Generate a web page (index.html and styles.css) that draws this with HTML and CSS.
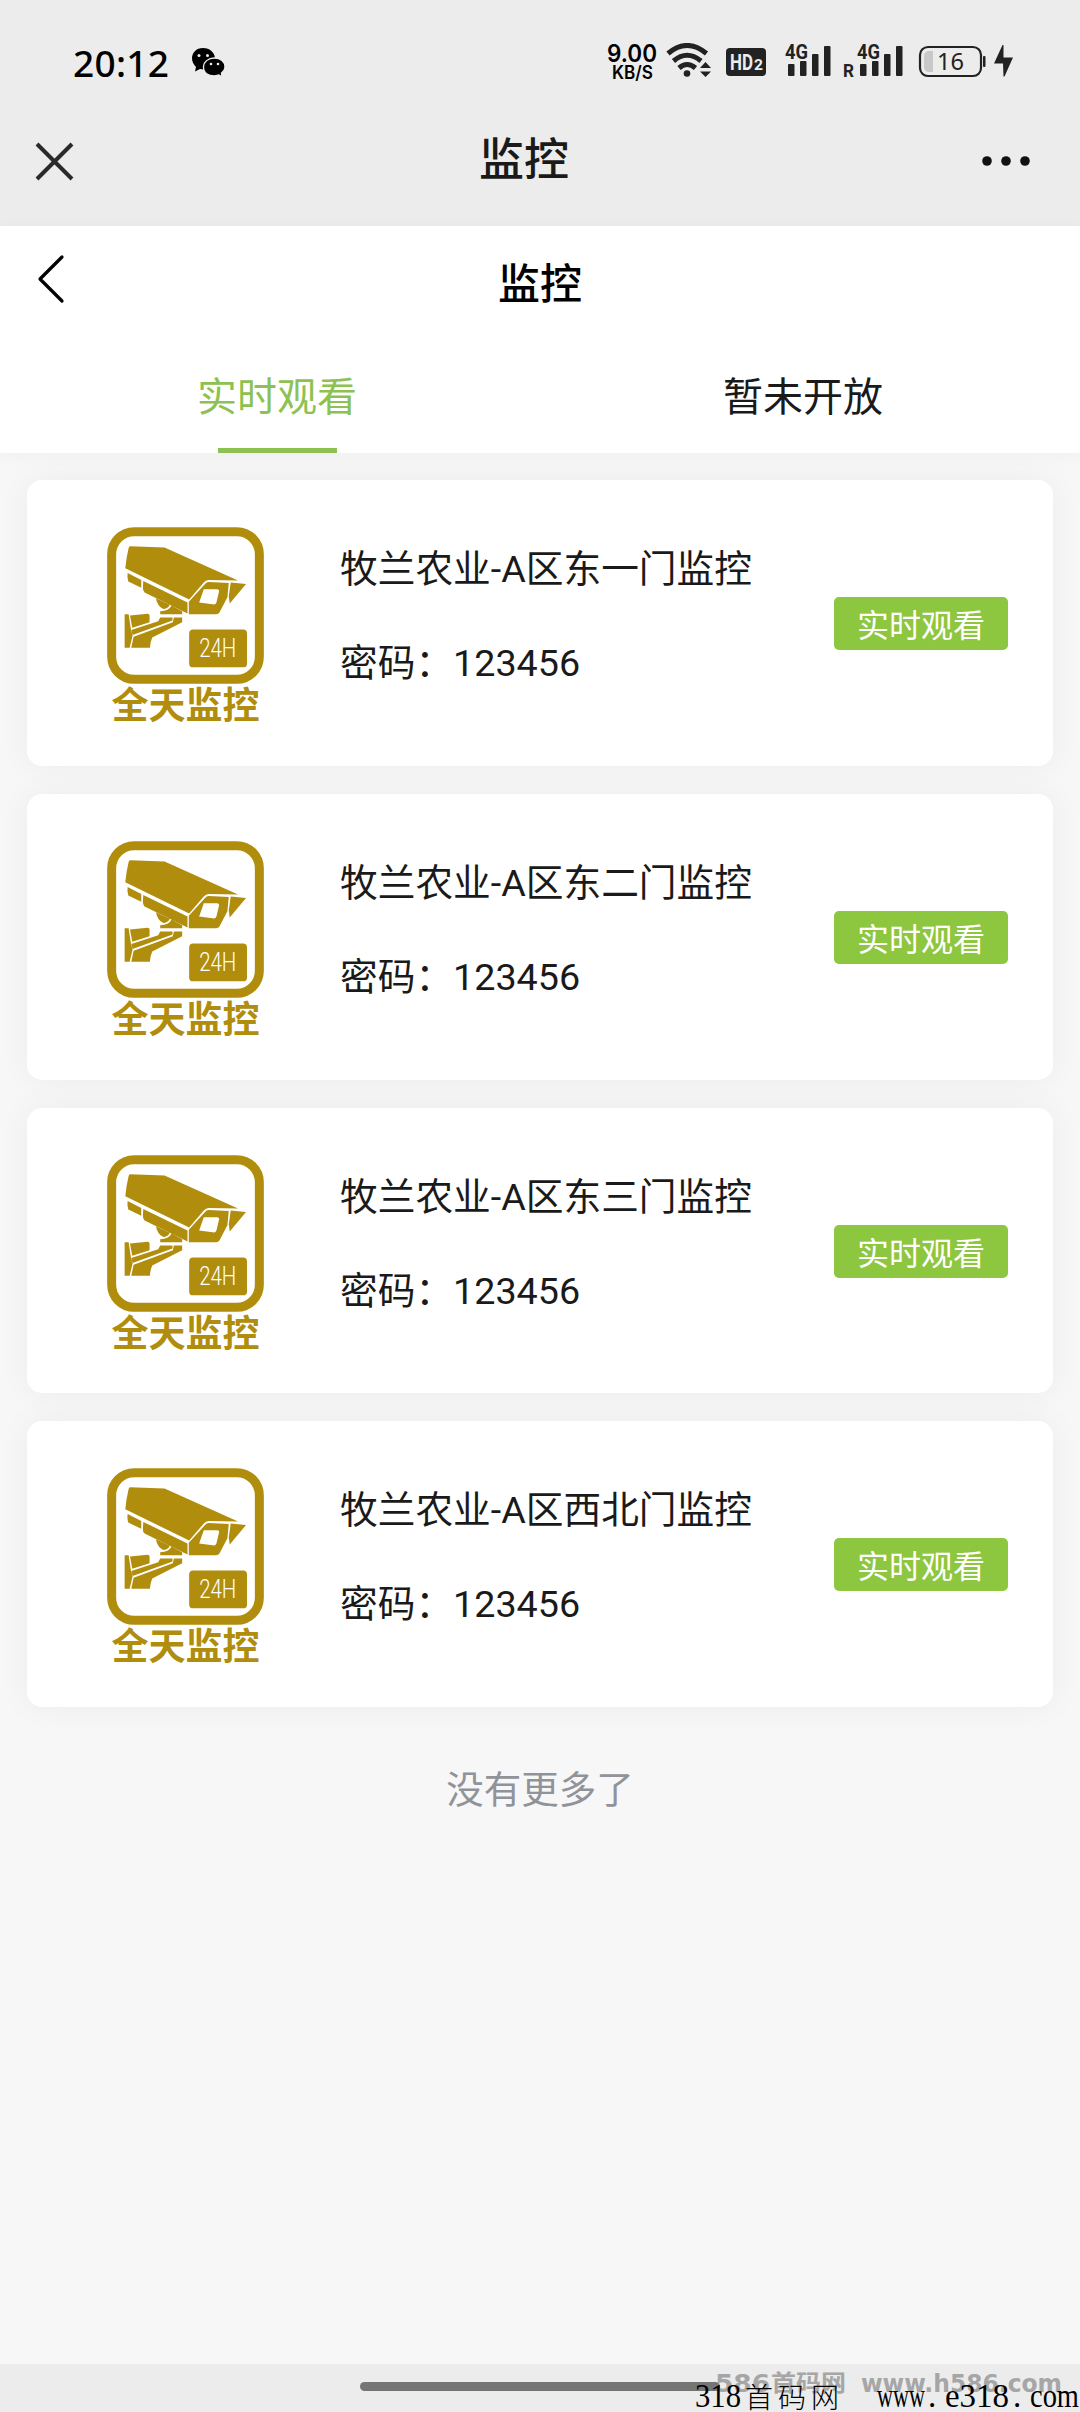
FILE: index.html
```html
<!DOCTYPE html>
<html lang="zh-CN">
<head>
<meta charset="utf-8">
<title>监控</title>
<link rel="stylesheet" href="styles.css">
</head>
<body>
<svg class="defs" width="0" height="0" aria-hidden="true">
  <symbol id="camera" viewBox="80 80 472 472">
    <rect x="94" y="94" width="444" height="444" rx="68" fill="none" stroke="#b08d0c" stroke-width="27"/>
    <g fill="#b08d0c">
      <path d="M150 138L253 142L474 241L386 239Q377 240 371 247L327 298L135 204Q138 172 145 143Q146 139 150 138Z"/>
      <path d="M142 218L183 239V263L144 244Q140 231 142 218Z"/>
      <path d="M189 242L322 307V340L193 277Q187 272 188 261Z"/>
      <path fill-rule="evenodd" d="M386 245L446 248L442 291L418 337Q415 342 408 342H326V305L374 252Q379 245 386 245ZM371 267L357 307L403 313Q407 312 409 307L417 273Q418 268 412 267Z"/>
      <path d="M452 247L498 251L449 310L446 289Z"/>
      <path d="M227 294L269 314Q262 328 248 326Q232 318 227 294Z"/>
      <path d="M274 316L306 333V342H240V333Q266 333 274 316Z"/>
      <path d="M133 342H145L152 388L157 406L148 443H133Z"/>
      <path d="M149 346L202 341Q208 341 208 347V366L156 383Z"/>
      <path d="M240 352H277V361L157 405L153 390L234 363Z"/>
      <path d="M281 352H306V366L216 412Q210 425 209 443H153L160 410L278 366Z"/>
      <rect x="327" y="388" width="174" height="114" rx="12"/>
    </g>
    <text x="357" y="471" class="camera-text" textLength="112" lengthAdjust="spacingAndGlyphs">24H</text>
  </symbol>
</svg>

<div class="screen">
  <header class="system">
    <div class="status">
      <span class="clock">20:12</span>
      <svg class="wechat" width="34" height="32" viewBox="0 0 34 32">
        <path d="M12 1C5 1 1 6 1 11.500C1 15 3 18 5 20L4 24.500L9 22C19 24 24 18 24 11.500C24 6 19 1 12 1Z"/>
        <path d="M23.500 11C17 11 12.500 15 12.500 20C12.500 26 17 29 23.500 29L28 28L31 30L30.500 26C33 24 34 22 34 20C34 15 29.500 11 23.500 11Z" stroke="#ececec" stroke-width="1.300"/>
        <g fill="#ececec"><circle cx="8" cy="8.500" r="1.500"/><circle cx="16.500" cy="8.500" r="1.500"/><circle cx="20" cy="17" r="1.300"/><circle cx="27" cy="17" r="1.300"/></g>
      </svg>
      <svg class="indicators" width="410" height="44" viewBox="0 0 410 44">
        <g class="speed"><text x="1" y="19" font-size="24" textLength="50" lengthAdjust="spacingAndGlyphs">9.00</text><text x="6" y="36" font-size="18.500" textLength="41" lengthAdjust="spacingAndGlyphs">KB/S</text></g>
        <g fill="none" stroke="#222" stroke-width="5">
          <path d="M62 10.500Q81 -5.500 100.500 10.500"/><path d="M67.500 18Q81 6.500 95 18"/><path d="M73 25Q81 18 89.500 25"/>
        </g>
        <g fill="#222">
          <circle cx="81" cy="30.500" r="3.300"/>
          <path d="M94 25L99.500 19L105 25ZM94 28.500H105L99.500 34Z"/>
          <rect x="120" y="5" width="40" height="28" rx="4"/>
        </g>
        <text x="124" y="26.500" class="cond" fill="#ececec" font-size="22" textLength="23" lengthAdjust="spacingAndGlyphs">HD</text>
        <text x="148" y="26.500" class="cond" fill="#ececec" font-size="14" textLength="9" lengthAdjust="spacingAndGlyphs">2</text>
        <g fill="#222">
          <text x="179" y="16" class="cond" font-size="21" textLength="23" lengthAdjust="spacingAndGlyphs">4G</text>
          <rect x="182" y="21" width="6.500" height="12" rx="1"/><rect x="194" y="18" width="6.500" height="15" rx="1"/><rect x="206" y="11" width="6.500" height="22" rx="1"/><rect x="218" y="3" width="6.500" height="30" rx="1"/>
          <text x="237" y="34" class="cond" font-size="18" textLength="11" lengthAdjust="spacingAndGlyphs">R</text>
          <text x="251" y="16" class="cond" font-size="21" textLength="23" lengthAdjust="spacingAndGlyphs">4G</text>
          <rect x="254" y="21" width="6.500" height="12" rx="1"/><rect x="266" y="18" width="6.500" height="15" rx="1"/><rect x="278" y="11" width="6.500" height="22" rx="1"/><rect x="290" y="3" width="6.500" height="30" rx="1"/>
        </g>
        <rect x="314" y="4" width="61" height="29" rx="8" fill="none" stroke="#222" stroke-width="2.200"/>
        <path d="M327 8V29H322Q318 28 318 24V13Q318 9 322 8Z" fill="#c8c8c8"/>
        <text x="331" y="27" class="level" font-size="23.500" textLength="27" lengthAdjust="spacingAndGlyphs">16</text>
        <rect x="377" y="13" width="2.500" height="11" rx="1" fill="#222"/>
        <path d="M396.500 2L388 20.500H397L397.500 33.500H398.500L407 14.500H397.500V2Z" fill="#222"/>
      </svg>
    </div>
    <div class="bar host-bar">
      <svg width="41" height="41" viewBox="0 0 41 41"><path d="M3 3L38 38M38 3L3 38" stroke="#2a2a2a" stroke-width="4" fill="none"/></svg>
      <h1>监控</h1>
      <svg width="48" height="10" viewBox="0 0 48 10"><g fill="#111"><circle cx="5" cy="5" r="4.800"/><circle cx="24" cy="5" r="4.800"/><circle cx="43" cy="5" r="4.800"/></g></svg>
    </div>
  </header>

  <div class="top">
    <div class="bar page-bar">
      <svg class="back" width="30" height="50" viewBox="0 0 30 50"><path d="M26 3L4 25L26 47" fill="none" stroke="#000" stroke-width="3.200" stroke-linecap="round" stroke-linejoin="round"/></svg>
      <h2>监控</h2>
      <span></span>
    </div>
    <nav class="tabs">
      <a class="tab active">实时观看</a>
      <a class="tab">暂未开放</a>
    </nav>
  </div>

  <main class="list">
    <article class="card">
      <div class="badge"><svg width="157" height="157"><use href="#camera"/></svg><b>全天监控</b></div>
      <div class="info"><p>牧兰农业-A区东一门监控</p><p>密码：123456</p></div>
      <button class="watch">实时观看</button>
    </article>
    <article class="card">
      <div class="badge"><svg width="157" height="157"><use href="#camera"/></svg><b>全天监控</b></div>
      <div class="info"><p>牧兰农业-A区东二门监控</p><p>密码：123456</p></div>
      <button class="watch">实时观看</button>
    </article>
    <article class="card">
      <div class="badge"><svg width="157" height="157"><use href="#camera"/></svg><b>全天监控</b></div>
      <div class="info"><p>牧兰农业-A区东三门监控</p><p>密码：123456</p></div>
      <button class="watch">实时观看</button>
    </article>
    <article class="card">
      <div class="badge"><svg width="157" height="157"><use href="#camera"/></svg><b>全天监控</b></div>
      <div class="info"><p>牧兰农业-A区西北门监控</p><p>密码：123456</p></div>
      <button class="watch">实时观看</button>
    </article>
    <p class="end">没有更多了</p>
  </main>

  <footer class="gesture"><span class="handle"></span></footer>

  <svg class="marks" width="420" height="48" viewBox="0 0 420 48">
    <g class="mark-back">
      <text x="55" y="28" textLength="55" lengthAdjust="spacingAndGlyphs">586</text>
      <text x="111" y="27" font-size="23" textLength="75" lengthAdjust="spacingAndGlyphs">首码网</text>
      <text x="201" y="28" textLength="201" lengthAdjust="spacingAndGlyphs">www.h586.com</text>
    </g>
    <g class="mark-front">
      <text x="35" y="43" textLength="46" lengthAdjust="spacingAndGlyphs">318</text>
      <text class="mark-cjk" x="85" y="44" textLength="94" lengthAdjust="spacing">首码网</text>
      <text x="217" y="43" textLength="48" lengthAdjust="spacingAndGlyphs">www</text>
      <text x="268" y="43">.</text>
      <text x="285" y="43" textLength="64" lengthAdjust="spacingAndGlyphs">e318</text>
      <text x="353" y="43">.</text>
      <text x="370" y="43" textLength="49" lengthAdjust="spacingAndGlyphs">com</text>
    </g>
  </svg>
</div>
</body>
</html>
```
FILE: styles.css
```css
* { box-sizing: border-box; }

body {
  margin: 0;
  font-family: Roboto, "Noto Sans CJK SC", sans-serif;
  color: #1a1a1a;
}

h1, h2, p { margin: 0; font-weight: 400; }
svg { display: block; flex: none; }
.defs { position: absolute; }

.screen {
  position: relative;
  width: 1080px;
  height: 2412px;
  display: flex;
  flex-direction: column;
  background: #f7f7f7;
  overflow: hidden;
}

.system { height: 226px; background: #ececec; }

.status {
  height: 98px;
  padding: 43px 64px 0 73px;
  display: flex;
  align-items: flex-start;
}
.clock {
  width: 118px;
  font: 500 37px/40px "Noto Sans", sans-serif;
  letter-spacing: 0.3px;
  color: #000;
  white-space: nowrap;
}
.wechat { margin-top: 4px; }
.indicators { margin-left: auto; }
.speed { font-family: Inter, sans-serif; font-weight: 600; fill: #000; }
.cond { font-family: Roboto, sans-serif; font-weight: 700; }
.level { font-family: "Noto Sans", sans-serif; fill: #222; }

.bar {
  display: grid;
  grid-template-columns: 1fr auto 1fr;
  align-items: center;
}
.bar > :last-child { justify-self: end; }

.host-bar { height: 126px; padding: 0 50px 0 34px; }
.host-bar svg { position: relative; top: 0; }
.host-bar h1 {
  font-size: 45px;
  line-height: 60px;
  font-weight: 500;
  margin-left: -16px;
}

.top {
  position: relative;
  height: 227px;
  background: #fff;
  box-shadow: 0 2px 16px rgba(0, 0, 0, 0.04);
}
.page-bar { height: 118px; padding: 0 36px; }
.back { margin-bottom: 12px; }
.page-bar h2 { font-size: 42px; line-height: 60px; font-weight: 500; color: #000; }

.tabs {
  height: 109px;
  padding: 0 14px;
  display: grid;
  grid-template-columns: 1fr 1fr;
}
.tab {
  display: flex;
  flex-direction: column;
  align-items: center;
  justify-content: space-between;
  padding-top: 24px;
  font-size: 40px;
  line-height: 60px;
}
.tab.active { color: #8dc252; }
.tab.active::after {
  content: "";
  width: 119px;
  height: 5px;
  background: #8dc252;
}

.list {
  flex: 1;
  padding: 27px 27px 0;
  display: flex;
  flex-direction: column;
  gap: 28px;
}
.card {
  height: 285.800px;
  flex: none;
  padding: 47px 45px 0 80px;
  display: flex;
  align-items: flex-start;
  background: #fff;
  border-radius: 15px;
  box-shadow: 0 0 32px rgba(0, 0, 0, 0.05);
}
.badge { width: 157px; display: flex; flex-direction: column; align-items: center; }
.badge b {
  margin-top: 2px;
  font-size: 37px;
  line-height: 42px;
  color: #b08d0c;
  white-space: nowrap;
}
.camera-text { font: 300 78px Roboto, sans-serif; fill: #fff; }
.info {
  margin: 17px 0 0 76px;
  display: flex;
  flex-direction: column;
  gap: 44px;
  font-size: 37.700px;
  line-height: 50px;
  white-space: nowrap;
}
.watch {
  width: 174px;
  height: 53px;
  margin: 70px 0 0 auto;
  padding: 0;
  border: 0;
  border-radius: 5px;
  background: #8dc63f;
  color: #fff;
  font: 400 32px/51px "Noto Sans CJK SC", sans-serif;
}
.end {
  margin-top: 27px;
  text-align: center;
  font-size: 37.500px;
  line-height: 56px;
  color: #909399;
}

.gesture {
  height: 48px;
  padding-top: 18px;
  background: #ececec;
}
.handle {
  display: block;
  width: 360px;
  height: 9px;
  margin: 0 auto;
  border-radius: 5px;
  background: #757575;
}

.marks { position: absolute; right: 0; bottom: 0; }
.mark-back {
  font-family: "DejaVu Sans", "Noto Sans CJK SC", sans-serif;
  font-weight: 700;
  font-size: 24px;
  fill: #a6a6a6;
}
.mark-front { font-family: "Liberation Serif", serif; font-size: 33px; fill: #000; }
.mark-cjk { font-family: "Noto Sans CJK SC", sans-serif; font-size: 28px; font-weight: 300; }
```
